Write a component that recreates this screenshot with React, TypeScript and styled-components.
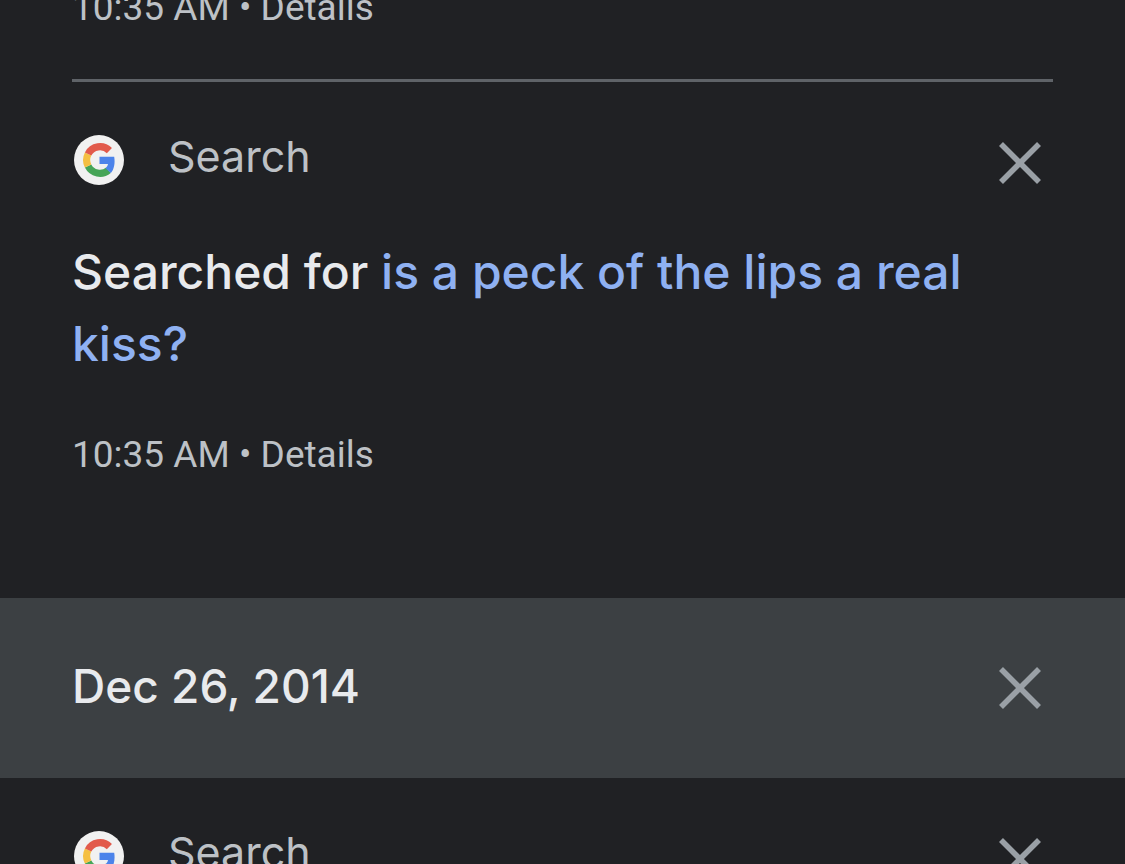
import React from "react";
import styled, { createGlobalStyle } from "styled-components";

const GlobalStyle = createGlobalStyle`
  *, *::before, *::after { box-sizing: border-box; }
  body {
    margin: 0;
    background: #202124;
    color: #e8eaed;
    font-family: Roboto, "Liberation Sans", sans-serif;
  }
`;

const Feed = styled.main`
  height: 100vh;
  overflow: hidden;
`;

const DayGroup = styled.section<{ $scrolled?: boolean }>`
  padding: 0 72px 72px;
  margin-top: ${(p) => (p.$scrolled ? "-12px" : "0")};
`;

const Entry = styled.article<{ $continued?: boolean }>`
  padding: ${(p) => (p.$continued ? "0" : "48px")} 0 51px;

  & + & {
    border-top: 3px solid #5f6368;
  }
`;

const EntryHeader = styled.header`
  display: flex;
  align-items: center;
  justify-content: space-between;
  margin-bottom: 40px;
`;

const Product = styled.div`
  display: flex;
  align-items: center;
  gap: 42px;
  padding-bottom: 6px;
`;

const ProductName = styled.span`
  color: #bdc1c6;
  font-family: Inter, Roboto, sans-serif;
  font-size: 43px;
  line-height: 48px;
  padding-bottom: 8px;
`;

const IconButton = styled.button`
  display: grid;
  place-items: center;
  width: 66px;
  height: 66px;
  padding: 0;
  border: 0;
  background: none;
  color: #9aa0a6;
  cursor: pointer;
`;

const Title = styled.h3`
  margin: 0 0 55px;
  font-family: Inter, Roboto, sans-serif;
  font-size: 48px;
  font-weight: 500;
  line-height: 72px;
`;

const QueryLink = styled.a`
  color: #8fb1f2;
  text-decoration: none;
`;

const Meta = styled.p`
  margin: 0;
  color: #bdc1c6;
  font-size: 37px;
  line-height: 40px;
`;

const DetailsLink = styled.a`
  color: inherit;
  text-decoration: none;
`;

const DayBar = styled.header`
  display: flex;
  align-items: center;
  justify-content: space-between;
  min-height: 180px;
  padding: 0 72px;
  background: #3c4043;
`;

const DayTitle = styled.h2`
  margin: 0;
  padding-bottom: 4px;
  font-family: Inter, Roboto, sans-serif;
  font-size: 46px;
  font-weight: 500;
  line-height: 72px;
`;

function GoogleLogo() {
  return (
    <svg width="54" height="54" viewBox="0 0 54 54" aria-hidden="true">
      <circle cx="27" cy="27" r="25" fill="#f1f1f1" />
      <g fill="none" strokeWidth="7.2">
        <path stroke="#46a557" d="M16.1 33A13.3 13.3 0 0 0 36.5 37.2" />
        <path stroke="#f5bf42" d="M16.1 21A13.3 13.3 0 0 0 16.1 33" />
        <path stroke="#e25a4b" d="M37.4 17.6A13.3 13.3 0 0 0 16.1 21" />
      </g>
      <path
        fill="#4c83ea"
        d="M27.5 23.7H42.2C43.3 30.5 42 36.3 38.9 40L33.5 35.2C34.9 34.1 35.7 32.7 36 31H27.5z"
      />
    </svg>
  );
}

function DeleteButton({ label }: { label: string }) {
  return (
    <IconButton type="button" aria-label={label}>
      <svg width="42" height="42" viewBox="0 0 42 42" aria-hidden="true">
        <path d="M2 2L40 40M40 2L2 40" stroke="currentColor" strokeWidth="5.6" fill="none" />
      </svg>
    </IconButton>
  );
}

function SearchHeader() {
  return (
    <EntryHeader>
      <Product>
        <GoogleLogo />
        <ProductName>Search</ProductName>
      </Product>
      <DeleteButton label="Delete activity item" />
    </EntryHeader>
  );
}

function EntryMeta({ time }: { time: string }) {
  return (
    <Meta>
      {time} • <DetailsLink href="#details">Details</DetailsLink>
    </Meta>
  );
}

export default function App() {
  return (
    <>
      <GlobalStyle />
      <Feed>
        <DayGroup $scrolled>
          <Entry $continued>
            <EntryMeta time="10:35 AM" />
          </Entry>
          <Entry>
            <SearchHeader />
            <Title>
              Searched for{" "}
              <QueryLink href="#query">is a peck of the lips a real kiss?</QueryLink>
            </Title>
            <EntryMeta time="10:35 AM" />
          </Entry>
        </DayGroup>
        <DayBar>
          <DayTitle>Dec 26, 2014</DayTitle>
          <DeleteButton label="Delete all activity from Dec 26, 2014" />
        </DayBar>
        <DayGroup>
          <Entry>
            <SearchHeader />
          </Entry>
        </DayGroup>
      </Feed>
    </>
  );
}
